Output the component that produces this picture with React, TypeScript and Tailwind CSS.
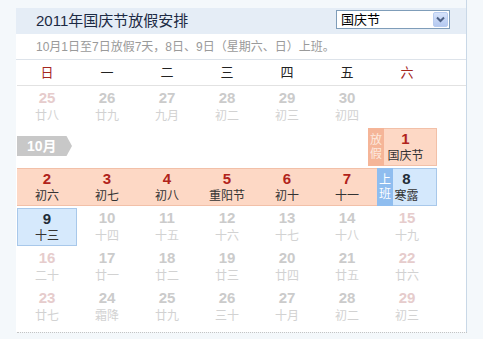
import React from "react";

type Day = { n: number; l: string; pink?: boolean };

const FONT = { fontFamily: '"Liberation Sans", "Noto Sans CJK SC", sans-serif' };

const row1: (Day | null)[] = [
  { n: 25, l: "廿八", pink: true },
  { n: 26, l: "廿九" },
  { n: 27, l: "九月" },
  { n: 28, l: "初二" },
  { n: 29, l: "初三" },
  { n: 30, l: "初四" },
  null,
];

const row2: Day[] = [
  { n: 2, l: "初六" },
  { n: 3, l: "初七" },
  { n: 4, l: "初八" },
  { n: 5, l: "重阳节" },
  { n: 6, l: "初十" },
  { n: 7, l: "十一" },
];

const row3: Day[] = [
  { n: 10, l: "十四" },
  { n: 11, l: "十五" },
  { n: 12, l: "十六" },
  { n: 13, l: "十七" },
  { n: 14, l: "十八" },
  { n: 15, l: "十九", pink: true },
];

const row4: Day[] = [
  { n: 16, l: "二十", pink: true },
  { n: 17, l: "廿一" },
  { n: 18, l: "廿二" },
  { n: 19, l: "廿三" },
  { n: 20, l: "廿四" },
  { n: 21, l: "廿五" },
  { n: 22, l: "廿六", pink: true },
];

const row5: Day[] = [
  { n: 23, l: "廿七", pink: true },
  { n: 24, l: "霜降" },
  { n: 25, l: "廿九" },
  { n: 26, l: "三十" },
  { n: 27, l: "十月" },
  { n: 28, l: "初二" },
  { n: 29, l: "初三", pink: true },
];

function GrayCell({ d }: { d: Day | null }) {
  if (!d) return <div className="h-[38px]" />;
  return (
    <div className="h-[38px] flex flex-col items-center">
      <div
        className={
          "h-[19px] leading-[20px] text-[15px] font-bold " +
          (d.pink ? "text-[#e6cccc]" : "text-[#cbcbcb]")
        }
      >
        {d.n}
      </div>
      <div className="h-[18px] leading-[18px] text-[12px] text-[#d2d2d2]">{d.l}</div>
    </div>
  );
}

function GrayRow({ days }: { days: (Day | null)[] }) {
  return (
    <div className="grid grid-cols-[repeat(7,60px)]">
      {days.map((d, i) => (
        <GrayCell key={i} d={d} />
      ))}
    </div>
  );
}

export default function App() {
  const weekdays = ["日", "一", "二", "三", "四", "五", "六"];
  return (
    <div className="relative w-[483px] h-[339px] bg-[#f4f8fb] overflow-hidden" style={FONT}>
      <div className="ml-[16px] w-[451px] h-[332px] border-r border-[#c9d8e7] flex flex-col">
        {/* header */}
        <div className="mt-[8px] h-[26px] bg-[#e5edf6] flex items-start justify-between pl-[20px] pr-[16px]">
          <div className="mt-[3px] text-[15px] leading-[20px] text-[#1c2a44]">2011年国庆节放假安排</div>
          <div className="mt-[2px] w-[114px] h-[19px] border border-[#7f9db9] bg-white flex items-center justify-between pl-[4px] pr-[1px]">
            <span className="text-[13px] leading-[16px] text-black">国庆节</span>
            <div className="w-[15px] h-[15px] rounded-[2px] bg-gradient-to-b from-[#d6e3fb] to-[#b5c9f0] border border-[#b8ccef] flex items-center justify-center">
              <svg width="9" height="7" viewBox="0 0 9 7">
                <path d="M1 1.5 L4.5 5 L8 1.5" fill="none" stroke="#4d6185" strokeWidth="2" />
              </svg>
            </div>
          </div>
        </div>
        {/* subtitle */}
        <div className="h-[26px] bg-white border-b border-[#dde3ea] pl-[20px] flex items-center text-[12px] text-[#9a9a9a]">
          10月1日至7日放假7天，8日、9日（星期六、日）上班。
        </div>
        {/* body */}
        <div className="flex-1 bg-white pl-[1px]">
          <div className="grid grid-cols-[repeat(7,60px)] h-[26px] border-b border-[#e2e2e2] w-[449px]">
            {weekdays.map((w, i) => (
              <div
                key={w}
                className={
                  "flex items-center justify-center text-[13px] " +
                  (i === 0 || i === 6 ? "text-[#a5281f]" : "text-[#222]")
                }
              >
                {w}
              </div>
            ))}
          </div>
          <div className="pt-[2px] flex flex-col gap-[2px]">
            <GrayRow days={row1} />
            {/* Oct 1 row */}
            <div className="flex h-[38px]">
              <div className="w-[351px]">
                <div className="mt-[8px] w-[55px] h-[20px] bg-[#c8c8c8] [clip-path:polygon(0_0,90%_0,100%_50%,90%_100%,0_100%)] pl-[10px] text-white font-bold text-[14px] leading-[20px]">
                  10月
                </div>
              </div>
              <div className="w-[16px] bg-[#f5b598] flex flex-col items-center justify-center text-[12px] leading-[14px] text-[#fde9de]">
                <span>放</span>
                <span>假</span>
              </div>
              <div className="w-[53px] bg-[#fdd8c5] border border-l-0 border-[#f2c0a8] pr-[9px] flex flex-col items-center">
                <div className="h-[18px] leading-[19px] text-[15px] font-bold text-[#b1231b]">1</div>
                <div className="h-[18px] leading-[18px] text-[12px] text-[#333]">国庆节</div>
              </div>
            </div>
            {/* Oct 2-8 */}
            <div className="flex h-[38px]">
              <div className="grid grid-cols-[repeat(6,60px)] bg-[#fdd8c5] border-y border-[#f2c0a8]">
                {row2.map((d) => (
                  <div key={d.n} className="flex flex-col items-center">
                    <div className="h-[18px] leading-[19px] text-[15px] font-bold text-[#b1231b]">{d.n}</div>
                    <div className="h-[18px] leading-[18px] text-[12px] text-[#333]">{d.l}</div>
                  </div>
                ))}
              </div>
              <div className="w-[16px] bg-[#8fbdef] flex flex-col items-center justify-center text-[12px] leading-[14px] text-white">
                <span>上</span>
                <span>班</span>
              </div>
              <div className="w-[44px] bg-[#d4e8fc] border border-l-0 border-[#a8c8ea] pr-[16px] flex flex-col items-center">
                <div className="h-[18px] leading-[19px] text-[15px] font-bold text-[#222c38]">8</div>
                <div className="h-[18px] leading-[18px] text-[12px] text-[#333]">寒露</div>
              </div>
            </div>
            {/* Oct 9-15 */}
            <div className="grid grid-cols-[repeat(7,60px)]">
              <div className="h-[38px] bg-[#d6e9fc] border border-[#a8c8ea] flex flex-col items-center">
                <div className="h-[18px] leading-[19px] text-[15px] font-bold text-[#222c38]">9</div>
                <div className="h-[18px] leading-[18px] text-[12px] text-[#333]">十三</div>
              </div>
              {row3.map((d) => (
                <GrayCell key={d.n} d={d} />
              ))}
            </div>
            <GrayRow days={row4} />
            <GrayRow days={row5} />
          </div>
        </div>
      </div>
      <div className="ml-[17px] w-[450px] border-t border-dotted border-[#c4c4c4]" />
    </div>
  );
}
